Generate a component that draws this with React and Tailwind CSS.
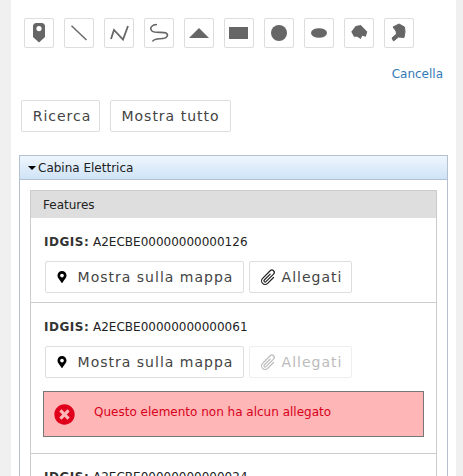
import { FaMapMarkerAlt, FaTimesCircle } from "react-icons/fa";
import { BsPaperclip } from "react-icons/bs";

const tools = [
  // marker
  <path key="m" fillRule="evenodd" d="M4 3.5Q4 0 7.5 0h5Q16 0 16 3.5V14l-6 5.5L4 14ZM10 3a2.6 2.6 0 1 0 0 5.2A2.6 2.6 0 0 0 10 3Z" fill="#666" />,
  <path key="l" d="M2.5 2.7 L17.5 17" stroke="#666" strokeWidth="1.4" fill="none" />,
  <path key="p" d="M2 16 L5 7 L14 16.5 L19 3" stroke="#666" strokeWidth="1.8" fill="none" />,
  <path key="f" d="M8 1.5C3 1.5 0 5 3 8C6 10.5 14 8.5 17 10C20 12 18 15 14 15.5C10 16 5 15 3.5 18.5" stroke="#666" strokeWidth="1.6" fill="none" />,
  <path key="t" d="M10 5 L20 15 L0 15 Z" fill="#666" />,
  <rect key="r" x="0" y="4" width="19" height="12" fill="#666" />,
  <circle key="c" cx="10" cy="10" r="8" fill="#666" />,
  <ellipse key="e" cx="10" cy="10" rx="8" ry="4.8" fill="#666" />,
  <path key="h" d="M2.3 8.7 L6.7 3 L11.7 2 L18.3 8.7 L16.7 13.7 L13.3 12.7 L11.7 16 L8.3 13.7 L5 13.7 Z" fill="#666" />,
  <path key="s" d="M4 4 L10 1 L15.5 4 L16 9 L15 14.5 L9.5 14 L4.5 18 L3 15 L7.5 11 L7 8 Z" fill="#666" stroke="#666" strokeLinejoin="round" />,
];

function ToolButton({ children }) {
  return (
    <div className="flex h-[30px] w-[30px] items-center justify-center rounded-[2px] border border-[#ddd] bg-white">
      <svg width="20" height="20" viewBox="0 0 20 20">
        {children}
      </svg>
    </div>
  );
}

function Button({ children, className = "" }) {
  return (
    <button
      className={`flex items-center justify-center rounded-[2px] border text-[14px] tracking-[1px] ${className}`}
    >
      {children}
    </button>
  );
}

function Feature({ id, disabled, children, last, className = "" }) {
  return (
    <div className={`pl-[13px] ${last ? "" : "border-b border-[#ccc]"} ${className}`}>
      <p className="h-[17px] text-[12px] leading-[17px] text-[#222]">
        <b className="tracking-[0.5px] text-[#333]">IDGIS:</b> {id}
      </p>
      <div className="mt-[10px] flex gap-[5px] pl-[1px]">
        <Button className="h-[32px] w-[199px] gap-[10px] border-[#ddd] text-[#444]">
          <FaMapMarkerAlt className="text-[12px] text-black" />
          Mostra sulla mappa
        </Button>
        <Button
          className={`h-[32px] w-[103px] gap-[4px] ${disabled ? "border-[#eee] text-[#bbb]" : "border-[#ddd] text-[#444]"}`}
        >
          <BsPaperclip className={`rotate-45 text-[19px] ${disabled ? "text-[#bbb]" : "text-[#222]"}`} />
          Allegati
        </Button>
      </div>
      {children}
    </div>
  );
}

export default function App() {
  return (
    <div className="h-[476px] overflow-hidden bg-[#f0f0f0] pl-[11px] pr-[7px] font-['DejaVu_Sans',sans-serif]">
      <div className="h-full bg-white">
        <div className="flex gap-[10px] pl-[13px] pt-[18px]">
          {tools.map((t, i) => (
            <ToolButton key={i}>{t}</ToolButton>
          ))}
        </div>
        <div className="mt-[18px] pr-[13px] text-right text-[12px] leading-[16px] text-[#337ab7]">
          Cancella
        </div>
        <div className="mt-[18px] flex gap-[10px] pl-[10px]">
          <Button className="h-[32px] w-[79px] border-[#ddd] pl-[3px] text-[#444]">Ricerca</Button>
          <Button className="h-[32px] w-[121px] border-[#ddd] text-[#444]">Mostra tutto</Button>
        </div>
        <div className="mx-[8px] mt-[23px] border border-[#b4bfd0] pb-[20px]">
          <div className="flex h-[24px] items-center gap-[2px] border-b border-[#b4bfd0] bg-gradient-to-b from-[#eef6fd] to-[#cfe3f7] pl-[8px] text-[12px] text-[#222]">
            <span className="mt-[1px] h-0 w-0 border-x-[4px] border-t-[4px] border-x-transparent border-t-black" />
            Cabina Elettrica
          </div>
          <div className="mx-[10px] mt-[10px] border border-b-0 border-[#ccc]">
            <div className="flex h-[27px] items-center bg-[#dedede] pl-[12px] text-[12px] text-[#222]">
              Features
            </div>
            <div className="flex flex-col gap-[15px] pt-[16px]">
              <Feature id="A2ECBE00000000000126">
                <div className="h-[9px]" />
              </Feature>
              <Feature id="A2ECBE00000000000061" disabled className="pt-[1px]">
                <div className="mb-[16px] mt-[13px] flex h-[46px] w-[381px] -translate-x-[1px] items-center border border-[#777] bg-[#ffb6b6] pl-[10px] text-[12px] text-[#d8001c]">
                  <FaTimesCircle className="text-[21px] text-[#e0001b]" />
                  <span className="mb-[4px] ml-[19px]">Questo elemento non ha alcun allegato</span>
                </div>
              </Feature>
              <Feature id="A2ECBE00000000000024" last />
            </div>
          </div>
        </div>
      </div>
    </div>
  );
}
